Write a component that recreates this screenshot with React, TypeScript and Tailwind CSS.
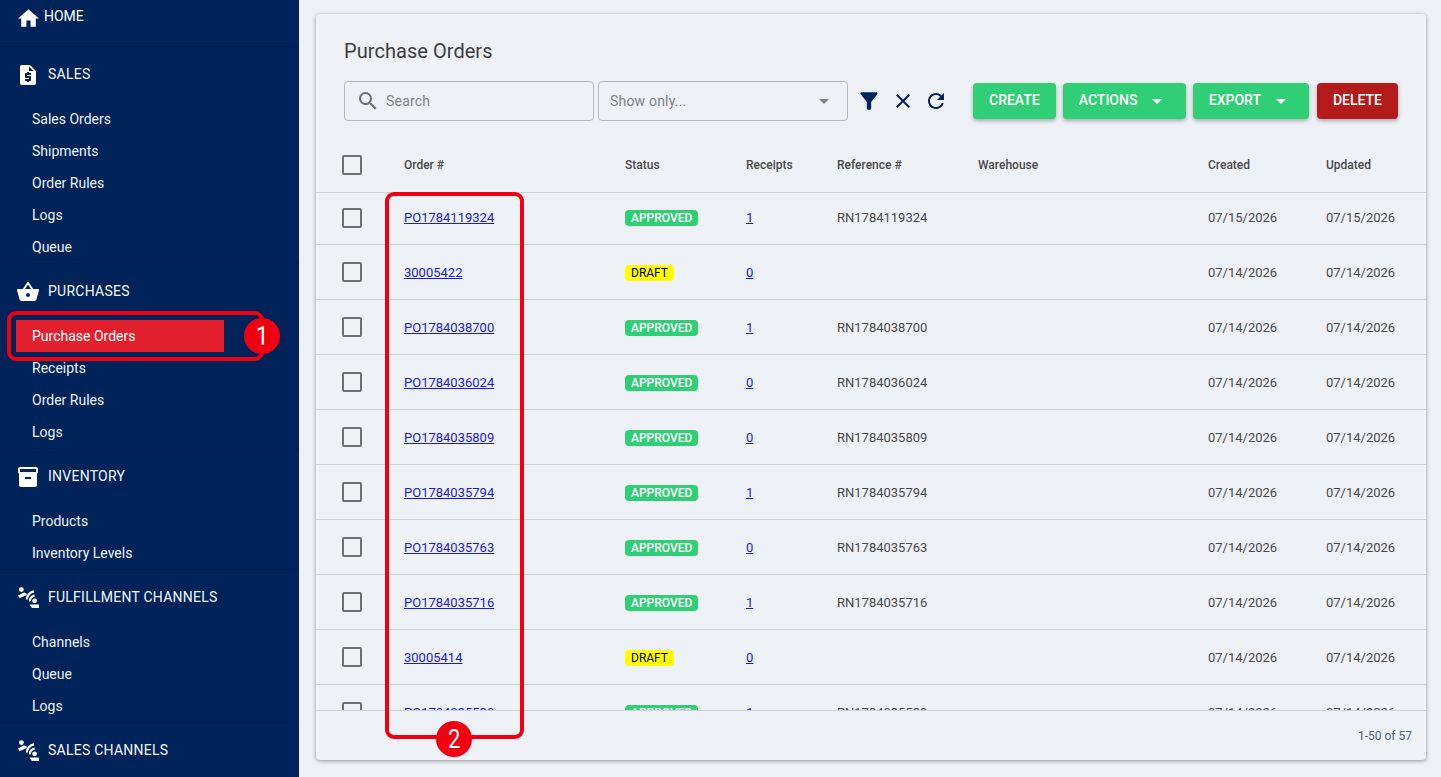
import { MdClose, MdRefresh, MdSearch, MdFilterAlt, MdArrowDropDown, MdHome, MdShoppingBasket, MdRequestQuote } from 'react-icons/md'

const font = { fontFamily: 'Roboto, sans-serif' }

function InventoryIcon() {
  return (
    <svg viewBox="0 0 24 24" className="w-[24px] h-[24px] fill-white">
      <path d="M20 2H4c-1 0-2 .9-2 2v3.01c0 .72.43 1.34 1 1.69V20c0 1.1 1.1 2 2 2h14c.9 0 2-.9 2-2V8.7c.57-.35 1-.97 1-1.69V4c0-1.1-1-2-2-2zm-5 12H9v-2h6v2zm5-7H4V4l16-.02V7z" />
    </svg>
  )
}

function ChannelIcon() {
  return (
    <svg viewBox="0 0 24 24" className="w-[24px] h-[24px]">
      <circle cx="5.4" cy="3.6" r="2.4" fill="#fff" />
      <path d="M2 9.6 L8 6.6 L10.6 7.4 L10.8 9.2 L3.6 12 z" fill="#fff" />
      <path d="M10.8 13.6 A8.5 8.5 0 0 1 18 5.4" fill="none" stroke="#fff" strokeWidth="2.1" />
      <path d="M14 15.4 A5 5 0 0 1 18.6 9.6" fill="none" stroke="#fff" strokeWidth="2.1" />
      <circle cx="18.6" cy="14.8" r="2.4" fill="#fff" />
      <path d="M13.4 18.4 h9.6 v3.6 h-7 z" fill="#fff" />
    </svg>
  )
}

const sections = [
  { title: 'SALES', icon: <MdRequestQuote className="w-[24px] h-[24px] text-white" />, items: ['Sales Orders', 'Shipments', 'Order Rules', 'Logs', 'Queue'] },
  { title: 'PURCHASES', icon: <MdShoppingBasket className="w-[24px] h-[24px] text-white" />, items: ['Purchase Orders', 'Receipts', 'Order Rules', 'Logs'] },
  { title: 'INVENTORY', icon: <InventoryIcon />, items: ['Products', 'Inventory Levels'] },
  { title: 'FULFILLMENT CHANNELS', icon: <ChannelIcon />, items: ['Channels', 'Queue', 'Logs'] },
  { title: 'SALES CHANNELS', icon: <ChannelIcon />, items: [] as string[] },
]

const rows = [
  { id: 'PO1784119324', status: 'APPROVED', receipts: 1, ref: 'RN1784119324', created: '07/15/2026', updated: '07/15/2026', h: 'h-[52px] pb-[2px]', t: '' },
  { id: '30005422', status: 'DRAFT', receipts: 0, ref: '', created: '07/14/2026', updated: '07/14/2026', h: 'h-[55px]', t: 'pt-[2px]' },
  { id: 'PO1784038700', status: 'APPROVED', receipts: 1, ref: 'RN1784038700', created: '07/14/2026', updated: '07/14/2026', h: 'h-[55px]', t: 'pt-[2px]' },
  { id: 'PO1784036024', status: 'APPROVED', receipts: 0, ref: 'RN1784036024', created: '07/14/2026', updated: '07/14/2026', h: 'h-[55px]', t: 'pt-[2px]' },
  { id: 'PO1784035809', status: 'APPROVED', receipts: 0, ref: 'RN1784035809', created: '07/14/2026', updated: '07/14/2026', h: 'h-[55px]', t: 'pt-[2px]' },
  { id: 'PO1784035794', status: 'APPROVED', receipts: 1, ref: 'RN1784035794', created: '07/14/2026', updated: '07/14/2026', h: 'h-[55px]', t: 'pt-[2px]' },
  { id: 'PO1784035763', status: 'APPROVED', receipts: 0, ref: 'RN1784035763', created: '07/14/2026', updated: '07/14/2026', h: 'h-[55px]', t: 'pt-[2px]' },
  { id: 'PO1784035716', status: 'APPROVED', receipts: 1, ref: 'RN1784035716', created: '07/14/2026', updated: '07/14/2026', h: 'h-[55px]', t: 'pt-[2px]' },
  { id: '30005414', status: 'DRAFT', receipts: 0, ref: '', created: '07/14/2026', updated: '07/14/2026', h: 'h-[55px]', t: 'pt-[2px]' },
  { id: 'PO1784035530', status: 'APPROVED', receipts: 1, ref: 'RN1784035530', created: '07/14/2026', updated: '07/14/2026', h: 'h-[55px]', t: 'pt-[2px]' },
]

function Checkbox() {
  return <div className="w-[20px] h-[20px] rounded-[2px] border-2 border-[#6f6f6f]" />
}

function Sidebar() {
  return (
    <aside className="w-[299px] h-full shrink-0 bg-[#00235a] overflow-hidden text-white">
      <div className="h-[46px] flex items-start pl-[16px] pt-[5px] gap-[3px]">
        <MdHome className="w-[25px] h-[25px] mt-[1px]" />
        <span className="text-[14px] leading-[22px] text-[#fff]">HOME</span>
      </div>
      {sections.map((s) => (
        <div key={s.title} className="border-t border-[#001f50]">
          <div className="h-[56px] flex items-center pl-[16px] gap-[8px]">
            {s.icon}
            <span className="text-[14px] tracking-[0.25px] text-[#f2f6fb] pb-[2px]">{s.title}</span>
          </div>
          {s.items.map((item) => (
            <div key={item} className={item === 'Purchase Orders' ? 'h-[32px] ml-[16px] w-[208px] bg-[#e3202d] pl-[16px] flex items-center text-[14px]' : 'h-[32px] pl-[32px] flex items-center text-[14px] text-[#eef4fb]'}>
              {item}
            </div>
          ))}
        </div>
      ))}
    </aside>
  )
}

function Button({ label, color, caret }: { label: string; color: string; caret?: boolean }) {
  return (
    <button className={`h-[36px] rounded-[4px] px-[16px] flex items-center text-[14px] font-medium text-white shadow-[0_2px_4px_rgba(0,0,0,0.3)] ${color}`}>
      <span className="pb-[1px]">{label}</span>
      {caret && <MdArrowDropDown className="w-[24px] h-[24px] ml-[8px]" />}
    </button>
  )
}

function Callout({ n }: { n: string }) {
  return <span className="inline-block scale-x-[0.85] text-[26px]">{n}</span>
}

export default function App() {
  return (
    <div style={font} className="relative flex w-[1441px] h-[777px] overflow-hidden bg-[#eef1f6]">
      <Sidebar />
      <main className="flex-1 pl-[17px] pr-[15px] pt-[14px] pb-[17px] min-w-0">
        <div className="h-full bg-[#eef1f6] rounded-[4px] shadow-[0_1px_4px_rgba(0,0,0,0.4)] flex flex-col overflow-hidden">
          <h1 className="pl-[28px] pt-[25px] text-[20px] leading-[24px] tracking-[0.05px] text-[#3d3d3d]">Purchase Orders</h1>
          <div className="flex items-center pl-[28px] mt-[18px] h-[40px]">
            <div className="w-[250px] h-[40px] border border-[#b4b8bf] rounded-[4px] flex items-center pl-[11px]">
              <MdSearch className="w-[24px] h-[24px] text-[#6e6e6e]" />
              <span className="ml-[6px] text-[14px] tracking-[0.2px] text-[#7f8287]">Search</span>
            </div>
            <div className="ml-[4px] w-[250px] h-[40px] border border-[#b4b8bf] rounded-[4px] flex items-center pl-[11px] pr-[11px]">
              <span className="flex-1 text-[14px] tracking-[0.2px] text-[#7f8287]">Show only...</span>
              <MdArrowDropDown className="w-[24px] h-[24px] text-[#7f8287]" />
            </div>
            <MdFilterAlt className="ml-[8px] w-[26px] h-[26px] text-[#00235a]" />
            <MdClose className="ml-[9px] w-[24px] h-[24px] text-[#00235a]" />
            <MdRefresh className="ml-[9px] w-[24px] h-[24px] text-[#00235a]" />
            <div className="ml-[25px] flex gap-[7px]">
              <Button label="CREATE" color="bg-[#30ce75]" />
              <Button label="ACTIONS" color="bg-[#30ce75] min-w-[123px]" caret />
              <Button label="EXPORT" color="bg-[#30ce75] min-w-[116px]" caret />
              <Button label="DELETE" color="bg-[#b31a1a] ml-[1px]" />
            </div>
          </div>
          <div className="flex items-center h-[54px] pb-[2px] mt-[18px] text-[12px] font-medium text-[#4a4a4a] border-b border-[#d0d3d9] shrink-0">
            <div className="w-[88px] pl-[26px]"><Checkbox /></div>
            <div className="w-[221px]">Order #</div>
            <div className="w-[121px]">Status</div>
            <div className="w-[91px]">Receipts</div>
            <div className="w-[141px]">Reference #</div>
            <div className="w-[230px]">Warehouse</div>
            <div className="w-[118px]">Created</div>
            <div>Updated</div>
          </div>
          <div className="flex-1 min-h-0 overflow-hidden">
            {rows.map((r) => (
              <div key={r.id} className={`flex items-center ${r.h} text-[13px] text-[#4a4a4a] border-b border-[#d0d3d9]`}>
                <div className="w-[88px] pl-[26px]"><Checkbox /></div>
                <div className={`w-[221px] ${r.t}`}><span className="underline text-[#1a1ae0]">{r.id}</span></div>
                <div className={`w-[121px] flex ${r.t}`}>
                  {r.status === 'APPROVED' ? (
                    <span className="h-[16px] px-[6px] rounded-[4px] bg-[#30ce75] text-white text-[12px] leading-[16px] font-medium">APPROVED</span>
                  ) : (
                    <span className="h-[16px] px-[6px] rounded-[4px] bg-[#ffff00] text-black text-[12px] leading-[16px]">DRAFT</span>
                  )}
                </div>
                <div className={`w-[91px] ${r.t}`}><span className="underline text-[#1a1ae0]">{r.receipts}</span></div>
                <div className={`w-[141px] ${r.t}`}>{r.ref}</div>
                <div className="w-[230px]" />
                <div className={`w-[118px] ${r.t}`}>{r.created}</div>
                <div className={r.t}>{r.updated}</div>
              </div>
            ))}
          </div>
          <div className="h-[50px] shrink-0 border-t border-[#d0d3d9] flex items-center justify-end pr-[14px] text-[12px] text-[#4b6280]">
            1-50 of 57
          </div>
        </div>
      </main>
      {/* callouts */}
      <div className="absolute left-[7px] top-[311px] w-[257px] h-[50px] rounded-[9px] border-[4px] border-[#f00010]" />
      <div className="absolute left-[244px] top-[318px] w-[36px] h-[36px] rounded-full bg-[#f00010] text-white flex items-center justify-center"><Callout n="1" /></div>
      <div className="absolute left-[385px] top-[192px] w-[139px] h-[547px] rounded-[9px] border-[4px] border-[#f00010]" />
      <div className="absolute left-[436px] top-[721px] w-[36px] h-[36px] rounded-full bg-[#f00010] text-white flex items-center justify-center"><Callout n="2" /></div>
    </div>
  )
}
